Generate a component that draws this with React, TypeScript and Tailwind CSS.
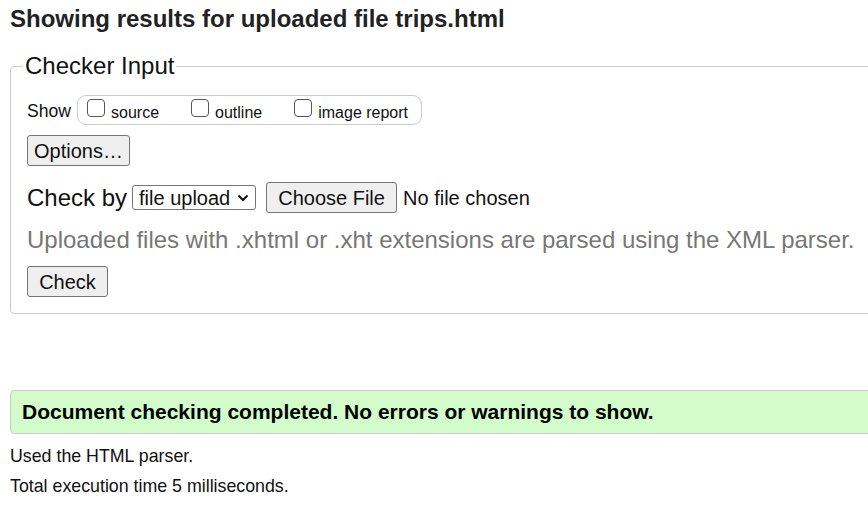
import React from "react";

function Box({ label }: { label: string }) {
  return (
    <label className="flex items-center">
      <span className="w-[18px] h-[18px] mb-[4px] border border-[#555] rounded-[4px] bg-white" />
      <span className="ml-[6px] mt-[5px] text-[16px] leading-[18px]">{label}</span>
    </label>
  );
}

const btn =
  "block h-[31px] border border-[#767676] rounded-[3px] bg-[#efefef] text-[20px] leading-[24px] text-[#111] text-center";

export default function App() {
  return (
    <div className="w-full min-h-screen overflow-hidden bg-white text-[#111] font-['Liberation_Sans',Arial,sans-serif]">
      <div className="w-[1000px] pl-[10px]">
        <h2 className="pt-[5px] text-[24px] leading-[28px] font-bold text-[#222]">
          Showing results for uploaded file trips.html
        </h2>

        <fieldset className="mt-[19px] border border-[#ccc] rounded-[4px] pl-[12px] pb-[16px]">
          <legend className="px-[2px] text-[24px] leading-[28px]">Checker Input</legend>
          <div className="pl-[4px]">
            <div className="mt-[15px] flex items-center h-[30px]">
              <span className="mr-[6px] mt-[2px] text-[17.6px] leading-[20px]">Show</span>
              <div className="h-[30px] flex items-center gap-[32px] border border-[#ccc] rounded-[9px] pl-[9px] pr-[13px]">
                <Box label="source" />
                <Box label="outline" />
                <Box label="image report" />
              </div>
            </div>

            <button className={`${btn} mt-[10px] w-[103px]`}>Options…</button>

            <div className="mt-[16px] flex items-center h-[31px]">
              <span className="mr-[5px] text-[24px] leading-[28px]">Check by</span>
              <div className="w-[124px] h-[25px] flex items-center border border-[#767676] rounded-[3px] pl-[6px] text-[20px] leading-[24px]">
                file upload
                <svg className="ml-auto mr-[6px]" width="12" height="8" viewBox="0 0 12 8">
                  <path d="M1.5 1.5 L6 6 L10.5 1.5" fill="none" stroke="#111" strokeWidth="2" />
                </svg>
              </div>
              <button className={`${btn} ml-[10px] w-[131px]`}>Choose File</button>
              <span className="ml-[6px] text-[20px] leading-[24px]">No file chosen</span>
            </div>

            <p className="mt-[13px] text-[24px] leading-[28px] text-[#777]">
              Uploaded files with .xhtml or .xht extensions are parsed using the XML parser.
            </p>

            <button className={`${btn} mt-[12px] w-[81px]`}>Check</button>
          </div>
        </fieldset>

        <div className="mt-[76px] h-[44px] flex items-center border border-[#ccc] rounded-[4px] bg-[#d2fdca] pl-[11px] text-[21px] leading-[24px] font-bold text-black">
          Document checking completed. No errors or warnings to show.
        </div>

        <p className="mt-[12px] text-[17.8px] leading-[20px]">Used the HTML parser.</p>
        <p className="mt-[10px] text-[17.8px] leading-[20px]">Total execution time 5 milliseconds.</p>
      </div>
    </div>
  );
}
